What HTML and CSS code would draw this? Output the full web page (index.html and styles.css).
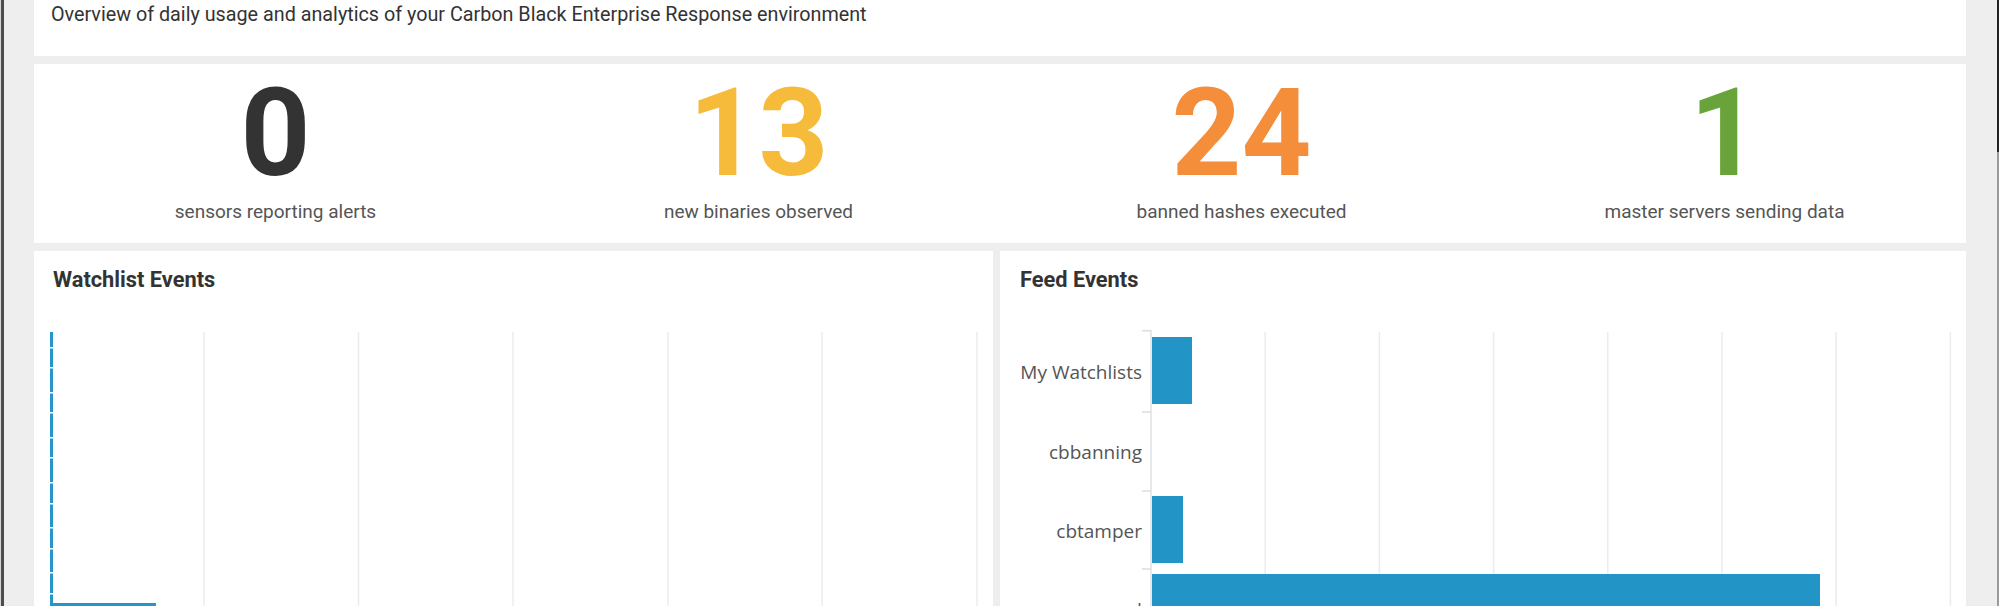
FILE: index.html
```html
<!DOCTYPE html>
<html lang="en">
<head>
<meta charset="utf-8">
<title>Dashboard</title>
<link rel="stylesheet" href="styles.css">
</head>
<body>
<div class="frame">
  <div class="edge-left"></div>
  <main class="main">
    <section class="panel intro">
      <p class="subtitle">Overview of daily usage and analytics of your Carbon Black Enterprise Response environment</p>
    </section>
    <section class="panel stats">
      <div class="stat">
        <div class="stat-num num-dark">0</div>
        <div class="stat-label">sensors reporting alerts</div>
      </div>
      <div class="stat">
        <div class="stat-num num-yellow">13</div>
        <div class="stat-label">new binaries observed</div>
      </div>
      <div class="stat">
        <div class="stat-num num-orange">24</div>
        <div class="stat-label">banned hashes executed</div>
      </div>
      <div class="stat">
        <div class="stat-num num-green">1</div>
        <div class="stat-label">master servers sending data</div>
      </div>
    </section>
    <div class="charts">
      <section class="panel chart-panel">
        <h2 class="chart-title">Watchlist Events</h2>
        <svg class="chart chart-line" width="959" height="290" viewBox="0 0 959 290">
          <g stroke="#ececec" stroke-width="1.5">
            <line x1="170" y1="0" x2="170" y2="290"/>
            <line x1="324.5" y1="0" x2="324.5" y2="290"/>
            <line x1="479" y1="0" x2="479" y2="290"/>
            <line x1="634" y1="0" x2="634" y2="290"/>
            <line x1="788" y1="0" x2="788" y2="290"/>
            <line x1="943" y1="0" x2="943" y2="290"/>
          </g>
          <rect x="16" y="0" width="3" height="274" fill="#2596c9"/>
          <rect x="16" y="271" width="106" height="3" fill="#2596c9"/>
          <g fill="#ffffff">
            <rect x="16" y="15" width="3" height="1.5"/>
            <rect x="16" y="35" width="3" height="1.5"/>
            <rect x="16" y="60" width="3" height="1.5"/>
            <rect x="16" y="80" width="3" height="1.5"/>
            <rect x="16" y="105" width="3" height="1.5"/>
            <rect x="16" y="125" width="3" height="1.5"/>
            <rect x="16" y="150" width="3" height="1.5"/>
            <rect x="16" y="171" width="3" height="1.5"/>
            <rect x="16" y="195" width="3" height="1.5"/>
            <rect x="16" y="216" width="3" height="1.5"/>
            <rect x="16" y="240" width="3" height="1.5"/>
            <rect x="16" y="261" width="3" height="1.5"/>
          </g>
        </svg>
      </section>
      <section class="panel chart-panel">
        <h2 class="chart-title chart-title-feed">Feed Events</h2>
        <svg class="chart chart-bar" width="966" height="290" viewBox="0 0 966 290">
          <g stroke="#ececec" stroke-width="1.5">
            <line x1="265.2" y1="2" x2="265.2" y2="290"/>
            <line x1="379.4" y1="2" x2="379.4" y2="290"/>
            <line x1="493.6" y1="2" x2="493.6" y2="290"/>
            <line x1="607.8" y1="2" x2="607.8" y2="290"/>
            <line x1="722" y1="2" x2="722" y2="290"/>
            <line x1="836.2" y1="2" x2="836.2" y2="290"/>
            <line x1="950.4" y1="2" x2="950.4" y2="290"/>
          </g>
          <line x1="151" y1="0" x2="151" y2="290" stroke="#dfe1e6" stroke-width="1.5"/>
          <g stroke="#dcdde2" stroke-width="1.5">
            <line x1="142" y1="0.75" x2="151" y2="0.75"/>
            <line x1="142" y1="82" x2="151" y2="82"/>
            <line x1="142" y1="161" x2="151" y2="161"/>
            <line x1="142" y1="239" x2="151" y2="239"/>
          </g>
          <g fill="#2394c6">
            <rect x="152" y="7" width="40" height="67"/>
            <rect x="152" y="166" width="31" height="67"/>
            <rect x="152" y="244" width="668" height="67"/>
          </g>
          <g class="axis-label" text-anchor="end">
            <text x="142" y="42" dominant-baseline="central">My Watchlists</text>
            <text x="142" y="122" dominant-baseline="central">cbbanning</text>
            <text x="142" y="201" dominant-baseline="central">cbtamper</text>
            <text x="142" y="280" dominant-baseline="central">nvd</text>
          </g>
        </svg>
      </section>
    </div>
  </main>
  <div class="edge-right"></div>
</div>
</body>
</html>
```

FILE: styles.css
```css
html, body {
  margin: 0;
  padding: 0;
  height: 606px;
  overflow: hidden;
  background: #eeeeee;
}

.frame {
  display: flex;
  height: 606px;
}

.edge-left {
  flex: none;
  width: 4px;
  background: linear-gradient(to right, #d6d6d6 0 1px, #4d4d4d 1px 4px);
}

.edge-right {
  flex: none;
  width: 2px;
  background: linear-gradient(to bottom, #222222 0 152px, #9a9a9a 152px);
}

.main {
  flex: 1;
  min-width: 0;
  padding: 0 31px 0 30px;
  display: flex;
  flex-direction: column;
  gap: 8px;
}

.panel {
  background: #ffffff;
}

.intro {
  flex: none;
  height: 56px;
  box-sizing: border-box;
  padding: 4px 17px 0;
}

.subtitle {
  margin: 0;
  font: 400 19.75px/22px Roboto, "Liberation Sans", sans-serif;
  color: #333333;
  white-space: nowrap;
}

.stats {
  flex: none;
  height: 179px;
  box-sizing: border-box;
  padding-top: 20px;
  display: grid;
  grid-template-columns: repeat(4, 1fr);
  align-content: start;
  text-align: center;
}

.stat-num {
  font: 700 122px/100px Roboto, "Liberation Sans", sans-serif;
}

.num-dark { color: #333333; }
.num-yellow { color: #f7bb3c; }
.num-orange { color: #f48e3b; }
.num-green { color: #69a43a; }

.stat-label {
  margin-top: 17px;
  font: 400 19px/22px Roboto, "Liberation Sans", sans-serif;
  color: #555555;
}

.charts {
  flex: 1;
  min-height: 0;
  display: grid;
  grid-template-columns: 959px 966px;
  gap: 7px;
}

.chart-panel {
  overflow: hidden;
  min-height: 0;
}

.chart-title {
  margin: 0;
  padding: 16px 19px 0;
  font: 700 21.8px/25px Roboto, "Liberation Sans", sans-serif;
  color: #333333;
}

.chart-title-feed {
  padding-left: 20px;
}

.chart {
  display: block;
}

.chart-line {
  margin-top: 40px;
}

.chart-bar {
  margin-top: 38px;
}

.axis-label {
  font-family: "Open Sans", "DejaVu Sans", sans-serif;
  font-size: 19px;
  fill: #555555;
}
```
